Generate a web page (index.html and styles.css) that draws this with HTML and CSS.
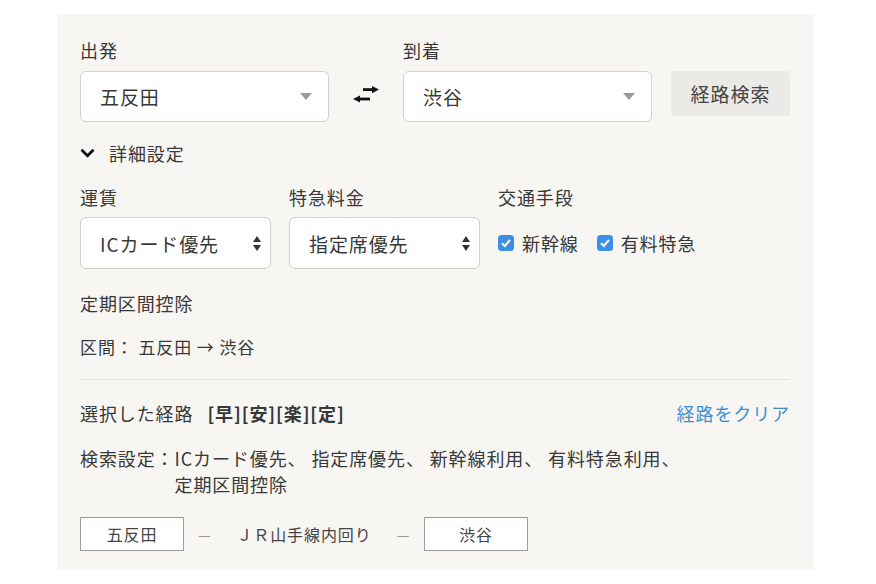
FILE: index.html
```html
<!DOCTYPE html>
<html lang="ja">
<head>
    <meta charset="UTF-8" />
    <meta name="viewport" content="width=device-width, initial-scale=1.0" />
    <title>経路検索</title>
    <link rel="stylesheet" href="styles.css">
</head>
<body>
    <div class="panel">
        <div class="search-row">
            <div class="field">
                <div class="label">出発</div>
                <div class="select wide">
                    <span>五反田</span>
                    <svg class="caret" width="12" height="7" viewBox="0 0 12 7"><polygon points="0,0 12,0 6,7" fill="#9a9a9a"/></svg>
                </div>
            </div>
            <button class="swap" type="button">
                <svg width="26" height="17" viewBox="0 0 26 17">
                    <rect x="10" y="2.2" width="10" height="2.8" fill="#111"/>
                    <polygon points="19,0 26,3.6 19,7.2" fill="#111"/>
                    <rect x="6" y="11.6" width="11" height="2.8" fill="#111"/>
                    <polygon points="0,13 7,9.4 7,16.6" fill="#111"/>
                </svg>
            </button>
            <div class="field">
                <div class="label">到着</div>
                <div class="select wide">
                    <span>渋谷</span>
                    <svg class="caret" width="12" height="7" viewBox="0 0 12 7"><polygon points="0,0 12,0 6,7" fill="#9a9a9a"/></svg>
                </div>
            </div>
            <button class="search-btn" type="button">経路検索</button>
        </div>

        <div class="toggle">
            <svg width="15" height="10" viewBox="0 0 15 10"><polyline points="1.5,1.8 7.5,7.8 13.5,1.8" fill="none" stroke="#111" stroke-width="2.8"/></svg>
            <span>詳細設定</span>
        </div>

        <div class="options">
            <div class="field">
                <div class="label">運賃</div>
                <div class="select narrow">
                    <span>ICカード優先</span>
                    <svg class="spin" width="8" height="15" viewBox="0 0 8 15"><polygon points="4,0 8,6 0,6" fill="#333"/><polygon points="0,9 8,9 4,15" fill="#333"/></svg>
                </div>
            </div>
            <div class="field">
                <div class="label">特急料金</div>
                <div class="select narrow">
                    <span>指定席優先</span>
                    <svg class="spin" width="8" height="15" viewBox="0 0 8 15"><polygon points="4,0 8,6 0,6" fill="#333"/><polygon points="0,9 8,9 4,15" fill="#333"/></svg>
                </div>
            </div>
            <div class="field">
                <div class="label">交通手段</div>
                <div class="checks">
                    <label class="check">
                        <svg width="16" height="16" viewBox="0 0 16 16"><rect width="16" height="16" rx="3.5" fill="#3d8fe6"/><polyline points="4,8.3 6.8,11 12,5" fill="none" stroke="#fff" stroke-width="2"/></svg>
                        <span>新幹線</span>
                    </label>
                    <label class="check">
                        <svg width="16" height="16" viewBox="0 0 16 16"><rect width="16" height="16" rx="3.5" fill="#3d8fe6"/><polyline points="4,8.3 6.8,11 12,5" fill="none" stroke="#fff" stroke-width="2"/></svg>
                        <span>有料特急</span>
                    </label>
                </div>
            </div>
        </div>

        <div class="teiki">定期区間控除</div>
        <div class="kukan">区間： 五反田 → 渋谷</div>

        <div class="divider"></div>

        <div class="selected">
            <div>選択した経路<b class="tags">[早][安][楽][定]</b></div>
            <a href="#" class="clear">経路をクリア</a>
        </div>

        <div class="settings">
            <span class="settings-head">検索設定：</span>
            <span class="settings-body">ICカード優先、 指定席優先、 新幹線利用、 有料特急利用、<br>定期区間控除</span>
        </div>

        <div class="route">
            <span class="station">五反田</span>
            <span class="dash">—</span>
            <span class="line">ＪＲ山手線内回り</span>
            <span class="dash">—</span>
            <span class="station">渋谷</span>
        </div>
    </div>
</body>
</html>
```

FILE: styles.css
```css
html, body {
    margin: 0;
    padding: 0;
}
body {
    background: #fff;
    font-family: "Noto Sans CJK JP", "Noto Sans", sans-serif;
    color: #383838;
    font-size: 18px;
    letter-spacing: 0.05em;
}
.panel {
    margin: 14px 0 0 57px;
    width: 757px;
    height: 556px;
    box-sizing: border-box;
    padding: 24px 24px 0 23px;
    background: #f7f6f3;
}
.label {
    line-height: 24px;
    margin-bottom: 9px;
}
.search-row {
    display: flex;
    align-items: flex-end;
}
.select {
    display: flex;
    align-items: center;
    justify-content: space-between;
    box-sizing: border-box;
    background: #fff;
    border: 1px solid #d3d1cd;
    border-radius: 6px;
    padding: 0 16px 0 19px;
    font-size: 19px;
}
.select.wide {
    width: 249px;
    height: 51px;
}
.select.narrow {
    width: 191px;
    height: 52px;
    padding-right: 9px;
}
.swap {
    border: none;
    background: none;
    padding: 0;
    margin: 0 24px 19px 24px;
    display: flex;
}
.search-btn {
    margin: 0 0 6px 19px;
    width: 119px;
    height: 45px;
    border: none;
    border-radius: 4px;
    background: #ebeae6;
    color: #444;
    font-family: inherit;
    font-size: 19px;
    letter-spacing: 0.05em;
}
.toggle {
    margin-top: 19px;
    display: flex;
    align-items: center;
    gap: 14px;
    line-height: 24px;
}
.options {
    margin-top: 20px;
    display: flex;
    gap: 18px;
}
.options .label {
    margin-bottom: 8px;
}
.checks {
    height: 52px;
    display: flex;
    align-items: center;
    gap: 18px;
}
.check {
    display: flex;
    align-items: center;
    gap: 8px;
}
.teiki {
    margin-top: 22px;
    line-height: 24px;
}
.kukan {
    margin-top: 20px;
    line-height: 24px;
    font-size: 17px;
}
.divider {
    margin-top: 20px;
    height: 1px;
    background: #e6e4e0;
}
.selected {
    margin-top: 21px;
    line-height: 24px;
    display: flex;
    justify-content: space-between;
}
.tags {
    margin-left: 14px;
    font-weight: 700;
}
.clear {
    color: #3d8fd2;
    text-decoration: none;
}
.settings {
    margin-top: 20px;
    line-height: 26px;
    display: flex;
}
.route {
    margin-top: 20px;
    display: flex;
    align-items: center;
    font-size: 16px;
    color: #444;
}
.station {
    width: 104px;
    height: 34px;
    box-sizing: border-box;
    border: 1px solid #9c9c9c;
    background: #fff;
    display: flex;
    align-items: center;
    justify-content: center;
}
.dash {
    color: #999;
    font-size: 14px;
    margin: 0 14px;
}
.line {
    margin: 0 11px;
}
```
